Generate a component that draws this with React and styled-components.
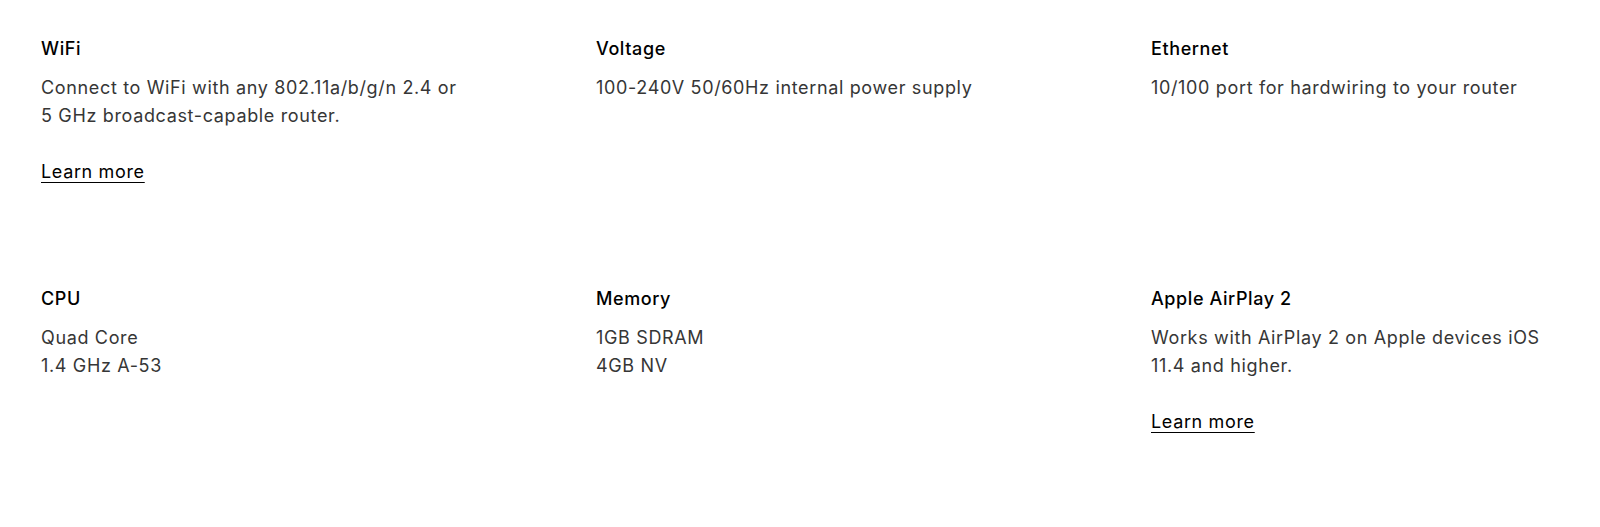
import React from 'react';
import styled, { createGlobalStyle } from 'styled-components';

const GlobalStyle = createGlobalStyle`
  body {
    margin: 0;
    background: #ffffff;
    font-family: Inter, "Noto Sans", "Liberation Sans", sans-serif;
    -webkit-font-smoothing: antialiased;
  }
`;

const StyledWrapper = styled.section`
  display: grid;
  grid-template-columns: repeat(3, 420px);
  column-gap: 135px;
  row-gap: 101px;
  padding: 37px 41px 0;
`;

const StyledSpec = styled.div`
  display: flex;
  flex-direction: column;
  align-items: flex-start;
`;

const StyledTitle = styled.h3`
  margin: 0 0 13px;
  font-size: 18px;
  line-height: 24px;
  font-weight: 500;
  letter-spacing: 0.6px;
  color: #000000;
`;

const StyledText = styled.p`
  margin: 0;
  font-size: 18px;
  line-height: 28px;
  font-weight: 400;
  color: #363636;
  letter-spacing: 0.65px;
`;

const StyledLink = styled.a`
  margin-top: 28px;
  font-size: 18px;
  line-height: 28px;
  letter-spacing: 0.65px;
  color: #000000;
  text-decoration: underline;
  text-underline-offset: 4px;
  text-decoration-thickness: 1px;
  cursor: pointer;
`;

const specs = [
  {
    title: 'WiFi',
    lines: ['Connect to WiFi with any 802.11a/b/g/n 2.4 or 5 GHz broadcast-capable router.'],
    link: true,
  },
  { title: 'Voltage', lines: ['100-240V 50/60Hz internal power supply'] },
  { title: 'Ethernet', lines: ['10/100 port for hardwiring to your router'] },
  { title: 'CPU', lines: ['Quad Core', '1.4 GHz A-53'] },
  { title: 'Memory', lines: ['1GB SDRAM', '4GB NV'] },
  {
    title: 'Apple AirPlay 2',
    lines: ['Works with AirPlay 2 on Apple devices iOS 11.4 and higher.'],
    link: true,
  },
];

const App = () => {
  return (
    <>
      <GlobalStyle />
      <StyledWrapper>
        {specs.map(({ title, lines, link }) => (
          <StyledSpec key={title}>
            <StyledTitle>{title}</StyledTitle>
            {lines.map((line) => (
              <StyledText key={line}>{line}</StyledText>
            ))}
            {link && <StyledLink href="#">Learn more</StyledLink>}
          </StyledSpec>
        ))}
      </StyledWrapper>
    </>
  );
};

export default App;
